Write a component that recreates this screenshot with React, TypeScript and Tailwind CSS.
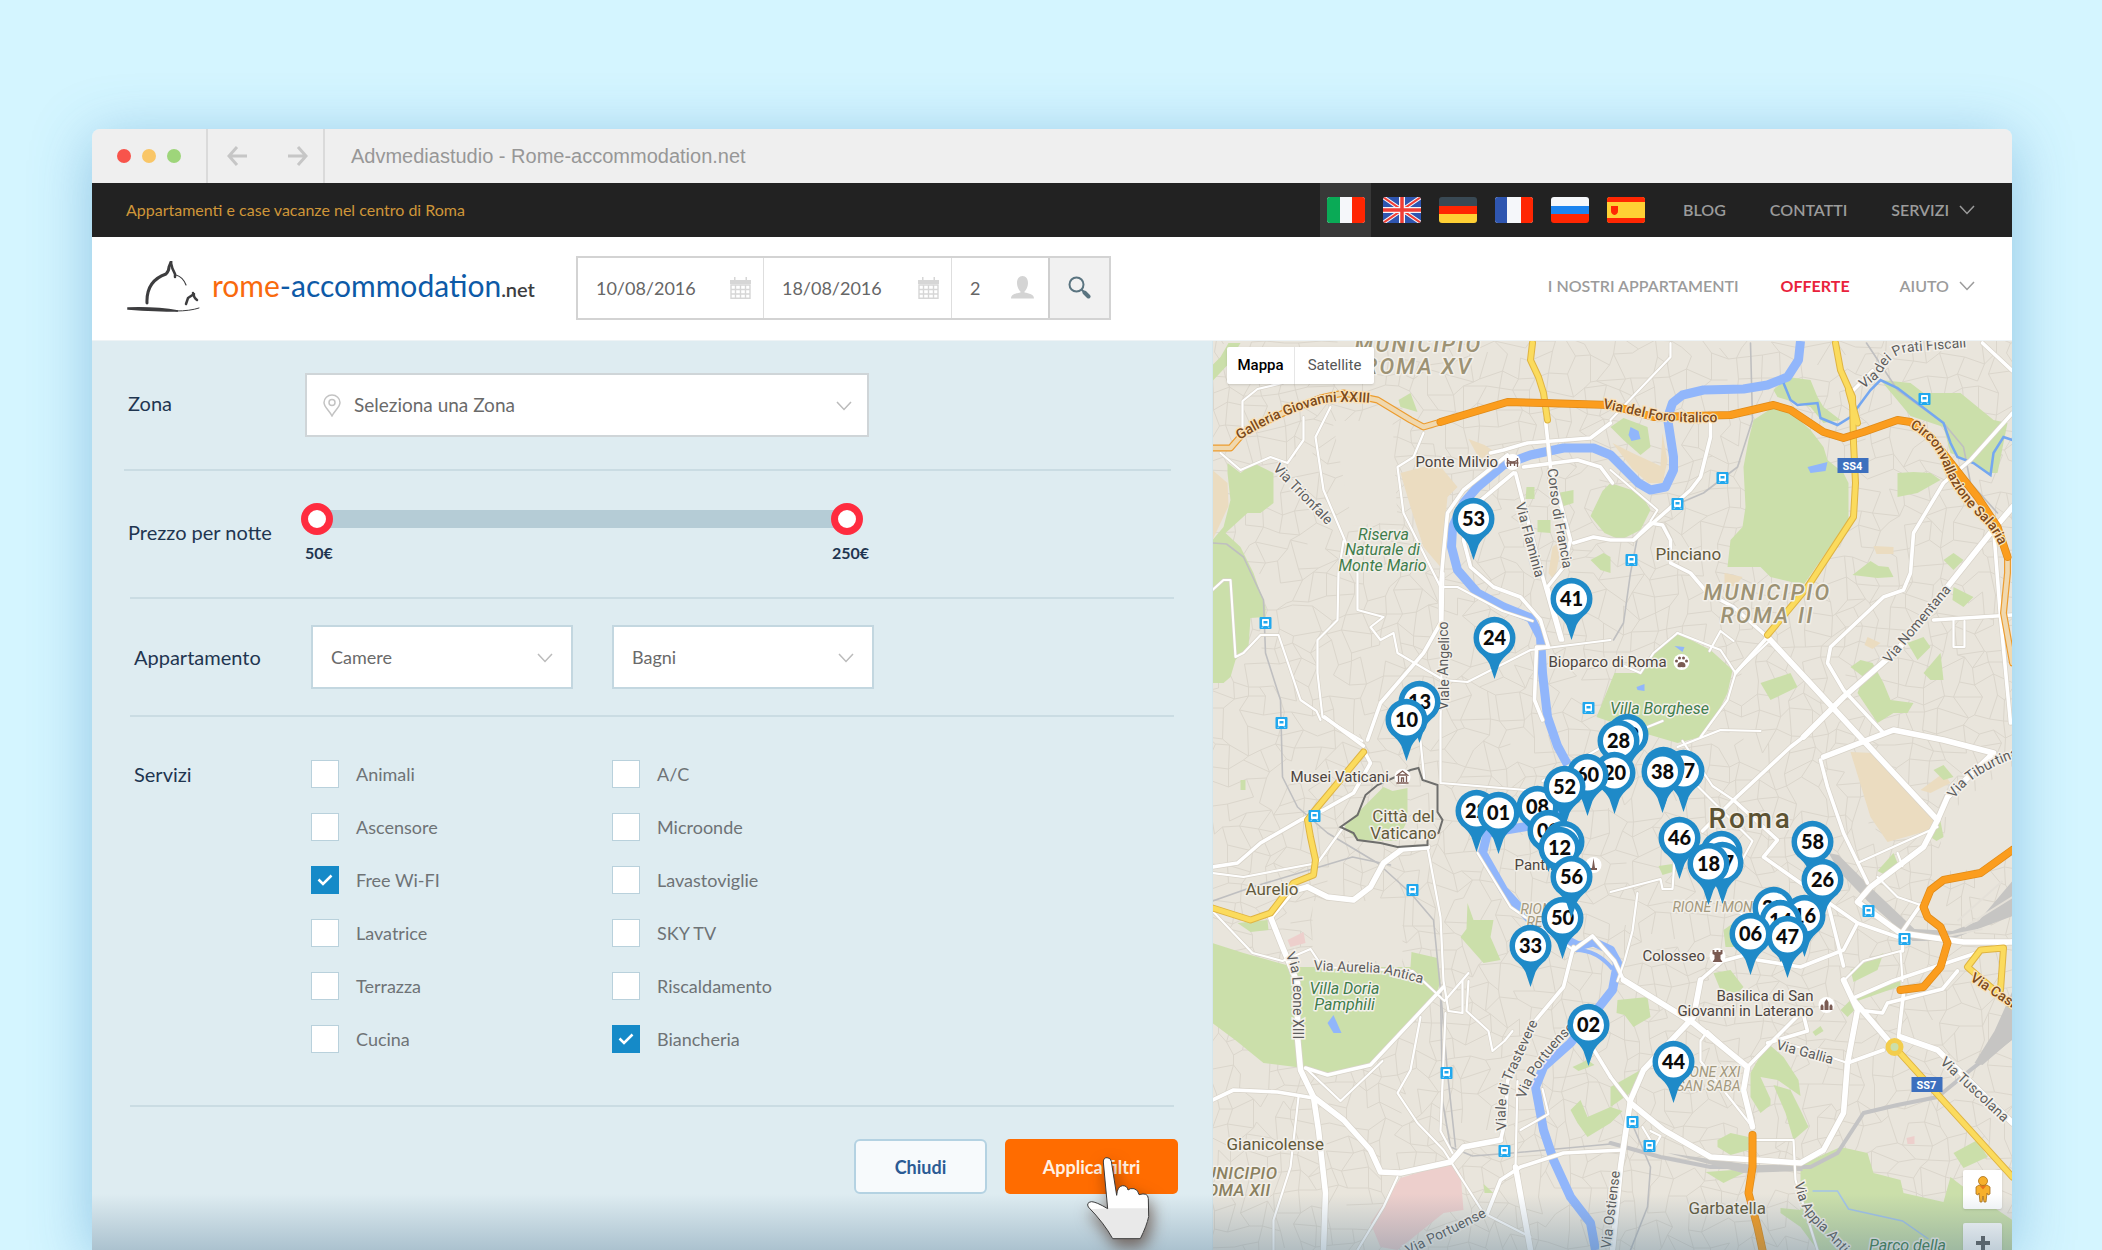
import React, { useState } from 'react';

const languages = ['Italiano', 'English', 'Deutsch', 'Français', 'Русский', 'Español'];

const services = [
  'Animali', 'A/C',
  'Ascensore', 'Microonde',
  'Free Wi-FI', 'Lavastoviglie',
  'Lavatrice', 'SKY TV',
  'Terrazza', 'Riscaldamento',
  'Cucina', 'Biancheria'
];

/* ---------- Map data (drawn in an 800 x 909 space) ---------- */

const parks = [
  '15,122 28,132 41,122 61,132 61,162 48,172 35,172 13,192 28,206 41,232 53,266 53,276 38,277 36,306 23,319 18,336 11,342 0,342 0,199 11,186 18,159 15,132',
  '0,40 15,24 28,2 16,2 8,16 0,24',
  '186,59 198,52 205,71 188,66',
  '378,175 390,150 398,142 428,152 438,169 428,189 408,199 392,192',
  '314,146 322,146 322,158 313,158',
  '345,152 361,149 361,162 348,166',
  '325,179 338,179 338,192 325,191',
  '378,219 391,212 398,216 398,232 388,229',
  '541,79 561,66 578,71 598,89 611,106 615,119 631,132 636,142 636,179 591,244 558,236 548,226 515,226 518,199 530,186 533,166 531,126 536,99',
  '561,49 575,36 598,39 605,56 611,66 628,79 611,82 598,66 565,56',
  '668,39 698,42 711,52 748,52 781,79 795,82 785,132 775,132 755,119 738,112 731,86 698,75',
  '685,132 701,131 718,132 728,139 705,152 685,156',
  '640,234 658,220 666,225 676,226 681,236 665,237',
  '731,219 741,212 751,219 741,229',
  '741,246 761,256 751,266 740,259',
  '695,302 711,296 718,306 705,319',
  '711,332 728,312 731,339 718,339',
  '638,326 648,319 660,322 671,342 678,359 701,362 695,372 681,372 665,382 645,352 651,336',
  '548,342 578,332 585,346 558,359',
  '441,312 465,292 498,309 520,329 515,352 505,372 488,396 465,402 431,392 384,376 402,332 428,332',
  '398,86 411,77 435,86 438,106 428,114 411,99',
  '158,459 171,446 180,450 195,447 195,479 185,500 145,499 131,486 145,472',
  '28,439 33,439 33,449 28,449',
  '255,562 261,579 281,579 278,596 288,619 271,622 248,596 254,588',
  '0,602 31,612 81,626 198,626 199,611 225,617 228,640 225,650 205,676 158,724 118,736 91,727 51,722 24,700 0,682',
  '25,582 55,579 56,589 38,591',
  '358,769 368,759 375,776 398,766 410,770 398,782 375,796 365,782',
  '360,726 375,719 382,724 366,730',
  '271,843 281,852 272,852',
  '721,429 731,424 741,436 731,439',
  '718,496 728,480 731,496 724,500',
  '511,589 521,582 525,606 513,606',
  '638,629 671,612 665,629 641,641',
  '665,530 681,512 685,522 671,533',
  '501,632 518,629 531,646 525,652 508,649',
  '446,525 460,523 460,531 450,534',
  '405,659 435,656 438,676 421,686 412,674 404,672',
  '398,746 428,729 418,752 398,766',
  '538,732 555,702 571,716 586,739 588,755 565,739 548,736 558,758 558,764 548,772 538,756',
  '561,744 578,749 588,769 596,786 581,799 573,772',
  '505,799 518,792 536,796 536,809 518,814 505,806',
  '493,831 521,829 531,832 511,842',
  '588,824 628,806 655,812 661,832 688,839 691,852 731,861 738,836 751,846 800,879 800,909 605,909 588,886 568,872 568,867 588,869',
  '741,812 765,799 775,816 751,827',
  '628,669 638,659 645,666 635,676',
  '641,655 688,640 688,645 645,660',
  '600,691 608,685 611,690 603,695'
];

const sands = [
  '0,129 15,142 16,165 0,199',
  '188,132 225,122 245,146 235,156 228,226 211,206 198,166',
  '256,98 272,104 284,112 268,120',
  '400,102 420,112 448,125 450,92 455,120 450,142 436,142 420,128',
  '350,199 342,240 336,232 340,206',
  '661,205 681,206 681,213 664,213',
  '638,411 661,412 721,479 718,489 675,501 658,476',
  '708,449 731,432 738,442 718,452',
  '655,296 668,302 660,308 652,304',
  '512,232 530,236 522,246 512,242'
];

const hospitals = [
  '188,837 238,822 248,832 251,869 231,872 185,909 168,906 158,882',
  '75,599 91,591 93,602 78,606',
  '694,797 702,795 702,803 695,803'
];

const ponds = [
  '418,86 426,90 428,98 419,100 416,94',
  '595,126 615,121 613,130 598,132',
  '115,682 121,674 129,692 121,692',
  '424,346 432,343 432,350 425,349',
  '462,305 472,306 470,311'
];

const railways = [
  '538,2 540,79 525,126 491,152 458,166 425,196 418,232 411,282 401,299',
  '654,2 685,49 731,82 751,106 758,142 785,172',
  '0,202 14,203 31,216 51,259 53,312 68,359 70,436 85,466 115,492 165,522 198,552 221,579 228,649 235,732 243,806',
  '0,560 40,546 100,528 140,516 178,524',
  '228,649 230,760 238,806 260,815 300,812 398,803',
  '421,786 438,826 435,866 418,909'
];

const ringRail = '398,802 448,816 498,826 598,826 625,812 651,772 685,764 725,756 758,729 800,696';

const thinRoads = [
  '8,112 28,129 58,116 75,122 91,99 91,76',
  '30,92 30,60 45,48 70,42',
  '118,66 103,96 111,149 131,196 145,232 145,269 171,276 158,286 168,299 181,292 185,312 231,339 255,341 318,309 398,299',
  '211,92 201,116 185,126 191,172 228,246 245,246 290,270 320,280',
  '0,249 11,239 18,239 23,316 31,312 48,294 66,294 88,359 104,370 108,379',
  '131,200 126,232 125,279 105,299 105,332 110,376 150,400',
  '0,532 31,536 105,522 131,486',
  '231,232 228,379 228,442 338,451',
  '198,360 208,400 212,440',
  '215,506 228,576 231,640 236,670 250,672 250,640',
  '0,570 40,612 70,620 98,608 110,626 200,630 232,660 256,632',
  '256,640 254,670 276,690 280,710 292,700 300,690',
  '208,676 198,729 185,752 205,782 231,809 271,872 318,896',
  '233,672 228,790 240,812',
  '86,756 78,826 61,879 61,909',
  '93,727 128,760 170,720',
  '185,836 171,866 145,909',
  '305,740 303,826',
  '308,789 336,773 330,748',
  '465,292 508,309 523,332 558,299',
  '465,292 441,312 428,332 400,320',
  '523,332 515,359 488,396',
  '458,2 458,16 398,79',
  '497,310 508,290 521,300',
  '741,279 741,306 752,306 752,280',
  '398,129 445,169 438,180',
  '645,522 725,486',
  '465,406 508,389 548,390',
  '398,551 448,538 450,548 460,548 462,520',
  '470,400 500,445 521,459',
  '665,536 685,556 708,564',
  '685,512 690,525',
  '631,640 651,620 688,610 690,640',
  '535,726 495,690 488,700 488,720 540,786',
  '540,799 581,799 583,839 605,909',
  '561,699 600,710 635,722',
  '438,790 448,795 442,806 430,786',
  '425,552 420,590 412,620 405,640',
  '265,512 298,566 361,609',
  '271,486 340,460',
  '330,440 400,400 450,380',
  '480,440 540,500 508,559 540,580'
];

const roads = [
  '278,112 291,109 315,102 378,97 398,82',
  '295,114 251,149 235,172 231,212 228,246 228,282 211,312 168,362 155,399',
  '301,132 265,162 251,199 258,226 281,246 308,256 328,279 336,306 324,306 322,359 330,379',
  '303,132 310,159 331,239 348,299',
  '333,79 338,126 358,199 351,226 335,246 350,299',
  '311,126 365,119 388,126 400,142',
  '361,202 381,196 398,199 421,199 438,182 450,184 458,199 458,222 478,232 495,252 521,266 555,296',
  '421,199 478,149 488,136 498,96 498,72',
  '591,396 578,406 521,459 490,490',
  '523,332 555,296',
  '800,72 758,119 731,142 701,192 698,232 691,249 671,256 618,306 615,322 631,349 671,392',
  '721,279 800,274',
  '781,186 788,276 798,382',
  '608,419 615,446 631,492 655,542',
  '521,459 565,499 551,516 645,582 685,596',
  '645,582 631,609 588,626 545,619',
  '616,565 631,625',
  '488,639 510,620 540,612',
  '708,564 690,590 690,610',
  '0,526 25,522 48,502 88,479 111,469 141,452 158,422 151,409',
  '112,376 151,405',
  '0,759 21,749 65,751 101,757',
  '93,727 115,734 158,724 231,646',
  '275,872 288,839 308,826 351,812 410,809',
  '361,606 351,646 315,689 295,740 293,779 288,799',
  '361,609 380,595 402,620 411,639',
  '635,722 671,709',
  '555,702 595,690 590,670 561,699 535,726',
  '641,657 680,640 800,600',
  '645,669 670,672 675,662 730,648 745,630',
  '691,652 686,696',
  '398,736 418,762',
  '376,700 398,736',
  '770,2 800,30',
  '640,50 660,30'
];

const avenues = [
  '555,296 641,389 725,479',
  '800,166 778,192 738,242 685,309 631,356 591,396',
  '611,416 681,389 731,399 781,412 735,456 725,479 711,506 658,546 645,561 688,592 751,601 800,601',
  '95,546 115,556 141,559 158,546 171,522 190,508 215,506',
  '95,546 80,550 58,576 70,606 85,642 85,696 88,729 101,756 131,779 158,809 168,831 188,832 238,821 251,806 288,799',
  '101,756 106,789 113,852 111,909',
  '303,826 318,909',
  '488,639 481,676 431,729 418,759 408,826 400,909',
  '411,639 481,682 535,726 531,749 540,786',
  '418,762 451,789 498,816 588,822 611,809 631,772 635,722 645,669 631,639',
  '641,659 678,702',
  '688,696 725,709 800,782'
];

const yellows = [
  '320,2 318,19 326,36 331,52 335,79',
  '623,2 628,29 640,56 641,102 643,142 641,176 595,246 555,294',
  '636,49 645,82',
  '151,411 101,471 95,479 98,496 103,519 101,534 81,542 58,572 38,579 0,567',
  '682,706 800,836',
  '788,649 791,607 768,609 755,626 800,665'
];

const oranges = [
  '228,81 241,77 295,61 331,62 398,64 441,76 518,74 561,64 578,69 611,91 631,97 651,91 685,79 698,81 718,96 765,156 785,186 795,216',
  '800,509 768,532 731,539 718,549 711,566 715,576 728,586 735,602 728,626 711,646 688,649',
  '540,794 540,826 536,852 545,886 550,909'
];

const tunnels = [
  '0,107 18,107 31,92 71,72 108,57 131,52 165,59 198,79 211,86 228,81',
  '795,216 795,232 791,272 800,322'
];

const tiber =
  'M588 0 586 19 575 36 555 44 531 48 491 49 470 54 460 62 455 77 461 116 461 129 453 146 438 149 426 142 398 114 381 107 351 107 318 114 291 124 265 146 251 162 240 186 239 206 245 229 265 252 291 266 318 277 328 296 330 332 335 376 345 405 358 429 355 460 346 478 311 486 275 492 270 512 291 549 318 579 348 596 366 605 381 601 398 609 405 622 400 649 358 702 331 726 323 746 331 789 341 819 358 856 378 882 383 909';

const aniene =
  '571,42 578,59 585,64 605,62 608,77 625,84 638,76 658,49 668,39 685,47 731,82 738,102 745,116 761,122 778,134 781,112 791,96 800,99';

const vatican =
  '206,427 210,439 225,444 225,471 230,479 226,492 215,496 215,504 185,506 168,502 145,499 141,492 128,486 145,474 153,454 165,444 198,429';

const stations = [
  [53, 282], [69, 382], [376, 367], [712, 58], [510, 137], [465, 163], [419, 219], [102, 475],
  [200, 549], [656, 570], [692, 598], [234, 732], [292, 810], [420, 781], [437, 805]
];

const markers: [string, number, number][] = [
  ['53', 261, 178], ['41', 359, 258], ['24', 282, 297], ['13', 207, 361], ['10', 194, 379],
  ['29', 415, 394], ['28', 406, 400], ['20', 402, 432], ['60', 375, 434],
  ['22', 264, 470], ['01', 286, 472], ['08', 325, 466], ['52', 352, 446],
  ['09', 336, 490], ['03', 351, 501], ['12', 347, 507], ['50', 350, 577], ['56', 359, 536], ['33', 318, 605],
  ['37', 471, 430], ['39', 451, 427], ['38', 450, 431],
  ['46', 467, 497], ['19', 509, 511], ['17', 510, 522], ['18', 496, 523],
  ['58', 600, 501], ['26', 610, 539], ['25', 561, 567], ['16', 592, 575], ['14', 568, 580], ['06', 538, 593], ['47', 575, 596],
  ['02', 376, 684], ['44', 461, 721]
];

// Labels that follow a street
const streetLabels = [
  { id: 'trionfale', text: 'Via Trionfale', d: 'M60 128 L116 186' },
  { id: 'flaminia', text: 'Via Flaminia', d: 'M303 163 L325 245' },
  { id: 'francia', text: 'Corso di Francia', d: 'M335 128 L340 170 L353 240' },
  { id: 'angelico', text: 'Viale Angelico', d: 'M236 369 L236 270' },
  { id: 'fiscali', text: 'Via dei Prati Fiscali', d: 'M651 48 L668 35 Q676 15 694 11 L780 4' },
  { id: 'nomentana', text: 'Via Nomentana', d: 'M677 323 L748 238' },
  { id: 'tiburtina', text: 'Via Tiburtina', d: 'M742 458 Q758 432 810 414' },
  { id: 'antica', text: 'Via Aurelia Antica', d: 'M101 629 L170 632 L215 644' },
  { id: 'leone', text: 'Via Leone XIII', d: 'M73 614 Q80 626 80 645 L80 720' },
  { id: 'trastevere', text: 'Viale di Trastevere', d: 'M294 789 Q290 755 303 730 L328 676' },
  { id: 'portuense', text: 'Via Portuense', d: 'M313 758 Q322 725 366 684' },
  { id: 'portuense-sud', text: 'Via Portuense', d: 'M196 914 L285 870' },
  { id: 'ostiense', text: 'Via Ostiense', d: 'M398 908 L410 810' },
  { id: 'gallia', text: 'Via Gallia', d: 'M563 708 L630 726' },
  { id: 'tuscolana', text: 'Via Tuscolana', d: 'M727 722 L800 790' },
  { id: 'appia', text: 'Via Appia Antica', d: 'M582 842 Q588 875 612 892 L650 935' }
];

const highwayLabels = [
  { id: 'galleria', text: 'Galleria Giovanni XXIII', d: 'M27 99 Q70 72 112 62 Q140 58 200 67' },
  { id: 'foro', text: 'Via del Foro Italico', d: 'M390 67 L440 78 Q470 84 540 79' },
  { id: 'salaria', text: 'Circonvallazione Salaria', d: 'M697 87 Q722 98 732 128 Q744 156 768 178 Q788 196 794 230' },
  { id: 'casilina', text: 'Via Casilina', d: 'M757 639 L810 674' }
];

// Small side streets: a jittered lattice with some links left out
function buildSideStreets(step: number) {
  const cols = Math.ceil(800 / step) + 1;
  const rows = Math.ceil(909 / step) + 1;
  const noise = (n: number) => {
    const v = Math.sin(n * 127.1 + 311.7) * 43758.5453;
    return v - Math.floor(v);
  };
  const point = (c: number, r: number) => {
    const seed = r * cols + c;
    return [
      Math.round(c * step + (noise(seed) - 0.5) * step * 0.9),
      Math.round(r * step + (noise(seed + 5000) - 0.5) * step * 0.9)
    ];
  };
  let d = '';
  for (let r = 0; r < rows; r++) {
    for (let c = 0; c < cols; c++) {
      const seed = r * cols + c;
      const [x, y] = point(c, r);
      if (noise(seed + 900) > 0.2) d += `M${x} ${y}L${point(c + 1, r).join(' ')}`;
      if (noise(seed + 1900) > 0.2) d += `M${x} ${y}L${point(c, r + 1).join(' ')}`;
    }
  }
  return d;
}

const sideStreets = buildSideStreets(17);

function Lines({ items, color, width }: { items: string[]; color: string; width: number }) {
  return (
    <g fill="none" stroke={color} strokeWidth={width} strokeLinejoin="round" strokeLinecap="round">
      {items.map((points) => (
        <polyline key={points} points={points} />
      ))}
    </g>
  );
}

function Shapes({ items, color }: { items: string[]; color: string }) {
  return (
    <g fill={color}>
      {items.map((points) => (
        <polygon key={points} points={points} />
      ))}
    </g>
  );
}

function RomeMap() {
  return (
    <svg
      className="absolute inset-0 h-full w-full font-['Roboto',sans-serif]"
      viewBox="0 0 800 909"
      preserveAspectRatio="xMidYMid slice"
      role="img"
      aria-label="Mappa di Roma"
    >
      <rect width="800" height="909" fill="#e9e5dc" />
      <path d={sideStreets} stroke="#dbd6cc" strokeWidth="1" fill="none" />
      <polygon points="748,460 800,425 800,512 768,528 735,530 728,500" fill="#e9e5dc" />
      <polygon points="100,560 190,560 190,620 100,620" fill="#e9e5dc" />
      <polygon points="120,80 180,80 185,180 140,185" fill="#e9e5dc" />
      <Shapes items={sands} color="#ebdcc0" />
      <Shapes items={hospitals} color="#edcfcc" />
      <Shapes items={parks} color="#cbdfaa" />

      {/* Railways and the Termini yard */}
      <Lines items={railways} color="#bfbfc0" width={1.6} />
      <Lines items={[ringRail]} color="#c3c3c4" width={4} />
      <g fill="#c6c5c3">
        <polygon points="616,512 626,514 662,550 702,588 740,590 766,580 800,540 800,575 760,590 735,600 700,600 655,560 628,532" />
        <polygon points="455,812 540,824 590,824 590,830 530,832" />
        <polygon points="800,650 782,690 762,722 770,724 800,698" />
      </g>
      <g stroke="#e4e0d8" strokeWidth="2" fill="none">
        <path d="M745 580 L790 540 M752 586 L800 556 M730 596 L770 588" />
      </g>

      {/* Water */}
      <path d={tiber} fill="none" stroke="#91b6fb" strokeWidth="9" strokeLinejoin="round" />
      <path d="M361 609 Q384 608 400 628" fill="none" stroke="#91b6fb" strokeWidth="4" />
      <polyline points={aniene} fill="none" stroke="#74a7f0" strokeWidth="2.5" />
      <path d="M600 850 L625 850 L636 868 L690 880 L716 898" fill="none" stroke="#a4c4e8" strokeWidth="1.5" />
      <Shapes items={ponds} color="#91b6fb" />

      {/* Roads: casing first, then the fill */}
      <Lines items={thinRoads} color="#d8d3c9" width={3.4} />
      <Lines items={roads} color="#d8d3c9" width={5} />
      <Lines items={avenues} color="#d8d3c9" width={7} />
      <Lines items={thinRoads} color="#ffffff" width={2.2} />
      <Lines items={roads} color="#ffffff" width={3.6} />
      <Lines items={avenues} color="#ffffff" width={5.6} />
      <Lines items={yellows} color="#dfb443" width={7} />
      <Lines items={yellows} color="#fbdb5d" width={5} />
      <circle cx="682" cy="706" r="6.5" fill="#cbdfaa" stroke="#f3cd4c" strokeWidth="5" />
      <Lines items={tunnels} color="#ec9c2f" width={7} />
      <Lines items={tunnels} color="#f0d8ae" width={4.6} />
      <Lines items={oranges} color="#e08a17" width={8} />
      <Lines items={oranges} color="#fb9d1e" width={6.5} />

      <polygon points={vatican} fill="none" stroke="#6e6e6c" strokeWidth="2" />

      {stations.map(([x, y]) => (
        <g key={`${x}-${y}`} transform={`translate(${x - 6} ${y - 6})`}>
          <rect width="12" height="12" rx="1" fill="#21a8ee" />
          <path d="M3 2.5h6v6H3z M3.5 9.5l-1 1.2 M8.5 9.5l1 1.2" fill="#ffffff" stroke="#ffffff" strokeWidth="1" />
          <path d="M4 4h4v2.5H4z" fill="#21a8ee" />
        </g>
      ))}

      {/* Labels */}
      <g stroke="#f3f0ea" strokeWidth="3" strokeLinejoin="round" paintOrder="stroke">
        <g fontSize="22" fontStyle="italic" fontWeight="500" fill="#9c9274" className="tracking-widest" textAnchor="middle">
          <text x="206" y="11">MUNICIPIO</text>
          <text x="206" y="33">ROMA XV</text>
          <text x="555" y="259">MUNICIPIO</text>
          <text x="555" y="282">ROMA II</text>
        </g>
        <g fontSize="17" fontStyle="italic" fontWeight="500" fill="#8a8060" className="tracking-wide" textAnchor="end">
          <text x="65" y="838">MUNICIPIO</text>
          <text x="58" y="855">ROMA XII</text>
        </g>
        <g fontSize="14" fontStyle="italic" fill="#a3997e">
          <text x="308" y="573">RIONE XI</text>
          <text x="314" y="586">REGOLA</text>
          <text x="460" y="571">RIONE I MONTI</text>
          <text x="528" y="736" textAnchor="end">RIONE XXI</text>
          <text x="528" y="750" textAnchor="end">SAN SABA</text>
        </g>
        <g fontSize="16" fontStyle="italic" fill="#3f7d4c" textAnchor="middle">
          <text x="171" y="199">Riserva</text>
          <text x="170" y="214">Naturale di</text>
          <text x="170" y="230">Monte Mario</text>
          <text x="447" y="373">Villa Borghese</text>
          <text x="132" y="653">Villa Doria</text>
          <text x="132" y="669">Pamphili</text>
          <text x="695" y="910">Parco della</text>
        </g>
        <g fontSize="15" fill="#4d4540">
          <text x="203" y="126">Ponte Milvio</text>
          <text x="336" y="326">Bioparco di Roma</text>
          <text x="78" y="441">Musei Vaticani</text>
          <text x="302" y="529">Pantheon</text>
          <text x="430" y="620">Colosseo</text>
          <text x="601" y="660" textAnchor="end">Basilica di San</text>
          <text x="601" y="675" textAnchor="end">Giovanni in Laterano</text>
        </g>
        <g fontSize="17" fill="#635a3c">
          <text x="443" y="219">Pinciano</text>
          <text x="33" y="554">Aurelio</text>
          <text x="14" y="809">Gianicolense</text>
          <text x="476" y="873">Garbatella</text>
          <text x="191" y="481" textAnchor="middle">Città del</text>
          <text x="191" y="498" textAnchor="middle">Vaticano</text>
        </g>
        <text x="496" y="487" fontSize="28" fontWeight="500" fill="#5c5232" className="tracking-widest">Roma</text>
      </g>
      {streetLabels.map((label) => (
        <g key={label.id}>
          <path id={label.id} d={label.d} fill="none" />
          <text fontSize="14" fill="#5c5c5c" stroke="#f3f0ea" strokeWidth="3" paintOrder="stroke">
            <textPath href={`#${label.id}`}>{label.text}</textPath>
          </text>
        </g>
      ))}
      {highwayLabels.map((label) => (
        <g key={label.id}>
          <path id={label.id} d={label.d} fill="none" />
          <text fontSize="14" fontWeight="500" fill="#7c4a1b" stroke="#fbe2b8" strokeWidth="2.5" paintOrder="stroke">
            <textPath href={`#${label.id}`}>{label.text}</textPath>
          </text>
        </g>
      ))}

      {/* Points of interest */}
      <g fill="#ffffff">
        <circle cx="300" cy="121" r="8" />
        <circle cx="469" cy="321" r="8" />
        <circle cx="190" cy="436" r="8" />
        <circle cx="381" cy="524" r="8" />
        <circle cx="505" cy="615" r="8" />
        <circle cx="614" cy="664" r="8" />
      </g>
      <g fill="none" stroke="#7a5b53" strokeWidth="1.3">
        <path d="M295 117v9 M305 117v9 M294 122h12 M295 119q5 4 10 0 M298 121v4 M302 121v4" />
        <path d="M185 434l5-4 5 4z M186 435v6 M194 435v6 M189 441v-4h2v4 M184 442h12" />
      </g>
      <g fill="#7a5b53">
        <path d="M465 325q0-4 4-4t4 4q0 2-4 1-4 1-4-1z" />
        <circle cx="464" cy="320" r="1.5" />
        <circle cx="467" cy="317" r="1.5" />
        <circle cx="471" cy="317" r="1.5" />
        <circle cx="474" cy="320" r="1.5" />
        <path d="M381 517l1.5 10h2v2h-7v-2h2z" />
        <path d="M500 609h2v2h2v-2h2v2h2v-2h2v4l-2 1v4l2 3h-10l2-3v-4l-2-1z" />
        <path d="M608 669v-4l1.5-2 1.5 2v4z M612 669v-8l2-3 2 3v8z M617 669v-4l1.5-2 1.5 2v4z" />
      </g>

      {/* State road shields */}
      <g fontSize="11" fontWeight="700" textAnchor="middle">
        <rect x="625" y="117" width="31" height="15" fill="#3c6fbe" />
        <text x="640" y="129" fill="#ffffff">SS4</text>
        <rect x="699" y="736" width="31" height="15" fill="#3c6fbe" />
        <text x="714" y="748" fill="#ffffff">SS7</text>
      </g>

      {markers.map(([label, x, y]) => (
        <g key={label} transform={`translate(${x} ${y})`}>
          <path d="M0 41 L-5 26 Q-8 20 -15 14.5 A21 21 0 1 1 15 14.5 Q8 20 5 26 Z" fill="#1f8ac8" />
          <circle r="15.5" fill="#ffffff" />
          <text y="7" textAnchor="middle" fontSize="20" fontWeight="900" fill="#0b0b0b" className="font-['Lato',sans-serif]">
            {label}
          </text>
        </g>
      ))}
    </svg>
  );
}

/* ---------- Small icons ---------- */

function Chevron({ className = '' }: { className?: string }) {
  return (
    <svg className={`h-[10px] w-4 ${className}`} viewBox="0 0 16 10" fill="none" stroke="currentColor" strokeWidth="1.5" aria-hidden="true">
      <path d="M1 1l7 7.5L15 1" />
    </svg>
  );
}

function CalendarIcon() {
  return (
    <svg className="h-[22px] w-[21px] shrink-0" viewBox="0 0 21 22" fill="#d6d6d6" aria-hidden="true">
      <path d="M0 3h21v4H0z M4 0h1.5v4H4z M15.5 0H17v4h-1.5z" />
      <path d="M1 8h19v13.3H1z M5.5 8v13 M10.5 8v13 M15.5 8v13 M1 12.5h19 M1 17h19" fill="none" stroke="#d6d6d6" strokeWidth="1.4" />
    </svg>
  );
}

function Flag({ code }: { code: string }) {
  return (
    <svg className="h-[26px] w-[38px] rounded-[3px]" viewBox="0 0 38 26" aria-hidden="true">
      {code === 'Italiano' && (
        <>
          <path fill="#f5f7fa" d="M0 0h38v26H0z" />
          <path fill="#0aaa56" d="M0 0h13v26H0z" />
          <path fill="#ff2602" d="M25 0h13v26H25z" />
        </>
      )}
      {code === 'English' && (
        <>
          <path fill="#2f56b0" d="M0 0h38v26H0z" />
          <path stroke="#f5f7fa" strokeWidth="4" d="M0 0l38 26M38 0L0 26" />
          <path stroke="#ef3e36" strokeWidth="2" d="M0 0l38 26M38 0L0 26" />
          <path stroke="#f5f7fa" strokeWidth="6" d="M19 0v26M0 13h38" />
          <path stroke="#ef3e36" strokeWidth="3.5" d="M19 0v26M0 13h38" />
        </>
      )}
      {code === 'Deutsch' && (
        <>
          <path fill="#394954" d="M0 0h38v9H0z" />
          <path fill="#ff2602" d="M0 9h38v8H0z" />
          <path fill="#ffd034" d="M0 17h38v9H0z" />
        </>
      )}
      {code === 'Français' && (
        <>
          <path fill="#f5f7fa" d="M0 0h38v26H0z" />
          <path fill="#2f56b0" d="M0 0h12v26H0z" />
          <path fill="#ff2602" d="M26 0h12v26H26z" />
        </>
      )}
      {code === 'Русский' && (
        <>
          <path fill="#f5f7fa" d="M0 0h38v9H0z" />
          <path fill="#1c84ef" d="M0 9h38v8H0z" />
          <path fill="#ff2602" d="M0 17h38v9H0z" />
        </>
      )}
      {code === 'Español' && (
        <>
          <path fill="#ffd034" d="M0 0h38v26H0z" />
          <path fill="#ff2602" d="M0 0h38v5H0z M0 21h38v5H0z M4 9h7v5q0 3-3.5 4Q4 17 4 14z" />
        </>
      )}
    </svg>
  );
}

function Dome() {
  return (
    <svg className="h-[52px] w-[74px] shrink-0" viewBox="0 0 74 52" fill="none" stroke="#3d3d3f" strokeLinecap="round" aria-hidden="true">
      <path d="M21 42 Q20 20 40 13 Q43 10 43 6 L45 1" strokeWidth="3" />
      <path d="M45 2 Q46 8 49 13 L49 16" strokeWidth="2.5" />
      <path d="M50 14 Q57 16 60 24" strokeWidth="1.2" />
      <path d="M60 43 L62 37 L68 33 M67 32 Q68 37 71 39" strokeWidth="2.5" />
      <path d="M2 47 Q30 46 52 50 Q30 50 2 48 Z" fill="#3d3d3f" strokeWidth="1.5" />
      <path d="M50 50 Q64 50 73 47" strokeWidth="1" />
    </svg>
  );
}

function HandCursor() {
  return (
    <svg
      className="pointer-events-none absolute left-[81px] top-[17px] z-20 h-[86px] w-[66px] drop-shadow-[3px_8px_8px_rgba(60,20,0,0.55)]"
      viewBox="920 290 198 258"
      aria-hidden="true"
    >
      <path
        d="M972 308 Q972 295 983 295 Q994 295 996 306 L1012 408 Q1014 380 1030 379 Q1044 379 1046 392 Q1052 386 1064 388 Q1077 391 1079 406 Q1106 398 1107 418 L1108 472 Q1102 500 1083 538 L1000 538 Q975 492 927 443 Q920 430 936 427 Q950 427 985 448 Z"
        fill="#ffffff"
      />
      <path d="M984 447 H1108 V472 Q1102 500 1083 538 L1000 538 Q975 492 935 450 Z" fill="#e9e9e9" />
      <path
        d="M972 308 Q972 295 983 295 Q994 295 996 306 L1012 408 Q1014 380 1030 379 Q1044 379 1046 392 Q1052 386 1064 388 Q1077 391 1079 406 Q1106 398 1107 418 L1108 472 Q1102 500 1083 538 L1000 538 Q975 492 927 443 Q920 430 936 427 Q950 427 985 448 Z"
        fill="none"
        stroke="#3a3a3a"
        strokeWidth="3"
      />
    </svg>
  );
}

/* ---------- Page sections ---------- */

function TitleBar() {
  return (
    <div className="flex h-[54px] items-stretch bg-[#efefef]">
      <div className="flex w-[116px] items-center gap-[11px] border-r-2 border-[#dadada] pl-[25px]">
        <span className="h-3.5 w-3.5 rounded-full bg-[#f8544b]" />
        <span className="h-3.5 w-3.5 rounded-full bg-[#f9c667]" />
        <span className="h-3.5 w-3.5 rounded-full bg-[#9ed57a]" />
      </div>
      <div className="flex w-[117px] items-center justify-between border-r-2 border-[#dadada] pl-[19px] pr-[15px] text-[#c6c6c6]">
        <button type="button" aria-label="Indietro">
          <svg className="h-5 w-5" viewBox="0 0 20 20" fill="none" stroke="currentColor" strokeWidth="3">
            <path d="M10 1L2 10l8 9M2 10h18" />
          </svg>
        </button>
        <button type="button" aria-label="Avanti">
          <svg className="h-5 w-5" viewBox="0 0 20 20" fill="none" stroke="currentColor" strokeWidth="3">
            <path d="M10 1l8 9-8 9M18 10H0" />
          </svg>
        </button>
      </div>
      <p className="flex items-center pl-[26px] font-['Liberation_Sans',sans-serif] text-xl text-[#979797]">
        Advmediastudio - Rome-accommodation.net
      </p>
    </div>
  );
}

function TopBar() {
  return (
    <div className="flex h-[54px] items-center justify-between bg-[#222222] pl-[34px] pr-[37px]">
      <p className="text-base text-[#cf9639]">Appartamenti e case vacanze nel centro di Roma</p>
      <div className="flex h-full items-center">
        <div className="mr-8 flex h-full gap-[5px]">
          {languages.map((language, index) => (
            <button
              key={language}
              type="button"
              aria-label={language}
              className={index === 0 ? 'flex w-[51px] items-center justify-center bg-[#383838]' : 'flex w-[51px] items-center justify-center'}
            >
              <Flag code={language} />
            </button>
          ))}
        </div>
        <nav className="flex items-center gap-11 text-base font-semibold text-[#9b9b9b]">
          <a href="#blog">BLOG</a>
          <a href="#contatti">CONTATTI</a>
          <a href="#servizi" className="flex items-center gap-2.5">
            SERVIZI <Chevron />
          </a>
        </nav>
      </div>
    </div>
  );
}

function Header() {
  return (
    <header className="flex h-[104px] items-center justify-between border-b border-[#eef3f5] bg-white pb-0.5 pl-[34px] pr-[37px]">
      <div className="flex items-center">
        <a href="#home" className="mr-[41px] flex items-center gap-3 pb-0.5">
          <Dome />
          <span className="text-[30px] leading-none text-[#0d5aa7]">
            <span className="text-[#f96a0d]">rome</span>-accommodation
            <span className="text-xl font-semibold text-[#3d3d3f]">.net</span>
          </span>
        </a>
        <form className="flex h-16 items-stretch border-2 border-[#d3d3d3] text-lg text-[#666666]">
          <label className="flex w-[186px] items-center justify-between border-r border-[#dedede] pl-[18px] pr-3">
            <input aria-label="Arrivo" defaultValue="10/08/2016" className="w-[110px] outline-none" />
            <CalendarIcon />
          </label>
          <label className="flex w-[188px] items-center justify-between border-r border-[#dedede] pl-[18px] pr-3">
            <input aria-label="Partenza" defaultValue="18/08/2016" className="w-[110px] outline-none" />
            <CalendarIcon />
          </label>
          <label className="flex w-[96px] items-center justify-between pl-[18px] pr-3.5">
            <input aria-label="Ospiti" defaultValue="2" className="w-6 outline-none" />
            <svg className="h-[23px] w-[23px]" viewBox="0 0 23 23" fill="#d4d4d4" aria-hidden="true">
              <path d="M11.5 0C15 0 17 3 17 7c0 3.5-2 7.5-3.5 8.5v1C18 17.5 23 18 23 22.5H0C0 18 5 17.5 9.5 16.5v-1C8 14.5 6 10.5 6 7c0-4 2-7 5.5-7z" />
            </svg>
          </label>
          <button type="submit" aria-label="Cerca" className="flex w-[61px] items-center justify-center border-l-2 border-[#cfcfcf] bg-[#f1f1f1]">
            <svg className="h-[23px] w-[23px]" viewBox="0 0 23 23" fill="none" stroke="#5a7480" aria-hidden="true">
              <circle cx="8.5" cy="8.5" r="7" strokeWidth="2" />
              <path d="M13.5 13.5l3 3" strokeWidth="2" />
              <path d="M16.5 16.5l4 4" strokeWidth="4" strokeLinecap="round" />
            </svg>
          </button>
        </form>
      </div>
      <nav className="flex items-center pb-1 text-base font-semibold text-[#9b9b9b]">
        <a href="#appartamenti" className="mr-[42px]">I NOSTRI APPARTAMENTI</a>
        <a href="#offerte" className="mr-[50px] font-bold text-[#e9223c]">OFFERTE</a>
        <a href="#aiuto" className="flex items-center gap-2.5">
          AIUTO <Chevron />
        </a>
      </nav>
    </header>
  );
}

function RoomSelect({ label, options }: { label: string; options: string[] }) {
  return (
    <div className="relative w-[262px]">
      <select aria-label={label} className="h-16 w-full appearance-none border-2 border-[#c3d7e0] bg-white pl-[18px] text-lg text-[#6a6a6a] outline-none">
        <option>{label}</option>
        {options.map((option) => (
          <option key={option}>{option}</option>
        ))}
      </select>
      <Chevron className="pointer-events-none absolute right-5 top-7 text-[#bbbbbb]" />
    </div>
  );
}

const rangeClass =
  'pointer-events-none absolute inset-0 h-8 w-full appearance-none bg-transparent [&::-webkit-slider-thumb]:pointer-events-auto [&::-webkit-slider-thumb]:h-8 [&::-webkit-slider-thumb]:w-8 [&::-webkit-slider-thumb]:appearance-none [&::-webkit-slider-thumb]:rounded-full [&::-webkit-slider-thumb]:border-[7px] [&::-webkit-slider-thumb]:border-[#ff2c3f] [&::-webkit-slider-thumb]:bg-white';

function Filters() {
  const [minPrice, setMinPrice] = useState(50);
  const [maxPrice, setMaxPrice] = useState(250);
  const [checked, setChecked] = useState(['Free Wi-FI', 'Biancheria']);

  const toggle = (service: string) => {
    setChecked(checked.includes(service) ? checked.filter((s) => s !== service) : [...checked, service]);
  };

  return (
    <form className="bg-[#deecf1] text-xl text-[#1f3550]">
      <div className="ml-8 mr-[41px]">
        {/* Zona */}
        <div className="flex items-center border-b-2 border-[#cadce3] py-8 pl-1">
          <label htmlFor="zona" className="w-[177px] pb-1">Zona</label>
          <div className="relative w-[564px]">
            <select id="zona" className="h-16 w-full appearance-none border-2 border-[#cfd5d8] bg-white pl-[47px] text-[19px] text-[#6a6a6a] outline-none">
              <option>Seleziona una Zona</option>
              <option>Centro storico</option>
              <option>Trastevere</option>
            </select>
            <svg className="pointer-events-none absolute left-[18px] top-[21px] h-[23px] w-[18px]" viewBox="0 0 18 23" fill="none" stroke="#c3c3c3" strokeWidth="1.5" aria-hidden="true">
              <path d="M9 22C6 16 1 13 1 8.5a8 7.5 0 0 1 16 0C17 13 12 16 9 22z" />
              <circle cx="9" cy="8.5" r="3" />
            </svg>
            <Chevron className="pointer-events-none absolute right-[17px] top-7 text-[#bbbbbb]" />
          </div>
        </div>

        {/* Prezzo */}
        <div className="flex items-center pb-8 pl-1 pt-8">
          <span className="w-[173px] pb-1">Prezzo per notte</span>
          <div className="w-[568px]">
            <div className="relative flex h-8 w-[562px] items-center px-4">
              <div className="h-[18px] w-full bg-[#b5ccd6]" />
              <input type="range" min="50" max="250" value={minPrice} onChange={(e) => setMinPrice(Number(e.target.value))} aria-label="Prezzo minimo" className={rangeClass} />
              <input type="range" min="50" max="250" value={maxPrice} onChange={(e) => setMaxPrice(Number(e.target.value))} aria-label="Prezzo massimo" className={rangeClass} />
            </div>
            <div className="mt-1.5 flex justify-between pl-1 text-base font-bold leading-6">
              <output>{minPrice}€</output>
              <output>{maxPrice}€</output>
            </div>
          </div>
        </div>
      </div>

      <div className="mx-[38px]">
        {/* Appartamento */}
        <div className="flex items-center border-y-2 border-[#cadce3] py-[26px] pl-1">
          <span className="w-[177px]">Appartamento</span>
          <div className="flex gap-[39px]">
            <RoomSelect label="Camere" options={['1', '2', '3']} />
            <RoomSelect label="Bagni" options={['1', '2']} />
          </div>
        </div>

        {/* Servizi */}
        <div role="group" aria-labelledby="servizi-label" className="flex border-b-2 border-[#cadce3] pb-[52px] pl-1 pt-[43px]">
          <span id="servizi-label" className="w-[177px]">Servizi</span>
          <div className="grid grid-cols-[301px_301px] gap-y-[25px]">
            {services.map((service) => (
              <label key={service} className="flex h-7 items-center gap-[17px] text-lg text-[#6e7376]">
                <span className="relative flex">
                  <input
                    type="checkbox"
                    checked={checked.includes(service)}
                    onChange={() => toggle(service)}
                    className="peer h-7 w-7 appearance-none border border-[#b9d1dc] bg-white checked:border-[#158ac8] checked:bg-[#158ac8]"
                  />
                  <svg className="pointer-events-none absolute left-1.5 top-2 hidden h-3 w-4 peer-checked:block" viewBox="0 0 16 12" fill="none" stroke="#ffffff" strokeWidth="2.5" aria-hidden="true">
                    <path d="M1.5 5.5L6 10l8.5-8.5" />
                  </svg>
                </span>
                {service}
              </label>
            ))}
          </div>
        </div>

        <div className="-mr-1 flex justify-end gap-[18px] pt-8 text-lg font-bold">
          <button type="button" className="h-[55px] w-[133px] rounded-md border-2 border-[#b4d2e2] bg-[#f7fafc] text-[#2b5b94]">
            Chiudi
          </button>
          <div className="relative">
            <button type="submit" className="h-[55px] w-[173px] rounded-[5px] bg-[#ff6c00] text-[#fff1e4]">
              Applica filtri
            </button>
            <HandCursor />
          </div>
        </div>
      </div>
    </form>
  );
}

function MapPanel() {
  return (
    <section className="relative overflow-hidden border-l border-[#d5e6ec]">
      <RomeMap />
      <div className="absolute left-3.5 top-1.5 flex h-[37px] rounded-xs bg-white font-['Roboto',sans-serif] text-[15px] shadow">
        <button type="button" className="w-[68px] border-r border-[#e6e6e6] font-medium text-black">Mappa</button>
        <button type="button" className="w-[79px] text-[#565656]">Satellite</button>
      </div>
      <div className="absolute -bottom-3 right-2.5 flex flex-col gap-3.5">
        <button type="button" aria-label="Street View" className="flex h-[39px] w-[39px] items-center justify-center rounded-xs bg-white shadow">
          <svg className="h-7 w-4" viewBox="0 0 16 28" fill="#f7b02c" stroke="#a8701a" strokeWidth="0.8" aria-hidden="true">
            <path d="M4 9h8l3 2v7l-2 1-1-2-1 9H9l-1-6-1 6H5l-1-9-1 2-2-1v-7z" />
            <path d="M4.5 9.5l3.5 4 3.5-4z" fill="#e8731d" stroke="none" />
            <circle cx="8" cy="5" r="4.5" />
          </svg>
        </button>
        <button type="button" aria-label="Ingrandisci" className="flex h-[39px] w-[39px] items-center justify-center rounded-xs bg-white shadow">
          <svg className="h-4 w-4" viewBox="0 0 16 16" stroke="#5f5f5f" strokeWidth="4" aria-hidden="true">
            <path d="M8 1v14M1 8h14" />
          </svg>
        </button>
      </div>
    </section>
  );
}

export default function App() {
  return (
    <div className="flex min-h-screen flex-col overflow-hidden bg-[#d4f5ff] px-[90px] pt-[129px] font-['Lato',sans-serif]">
      <main className="relative ml-0.5 flex flex-1 flex-col rounded-t-lg shadow-[0_10px_60px_rgba(50,130,190,0.42)]">
        <div className="flex flex-1 flex-col overflow-hidden rounded-t-lg">
          <TitleBar />
          <TopBar />
          <Header />
          <div className="grid flex-1 grid-cols-[7fr_5fr]">
            <Filters />
            <MapPanel />
          </div>
        </div>
        <div className="pointer-events-none absolute inset-x-0 bottom-0 z-10 h-14 bg-linear-to-b from-transparent to-[#4d7490]/35" />
      </main>
    </div>
  );
}
